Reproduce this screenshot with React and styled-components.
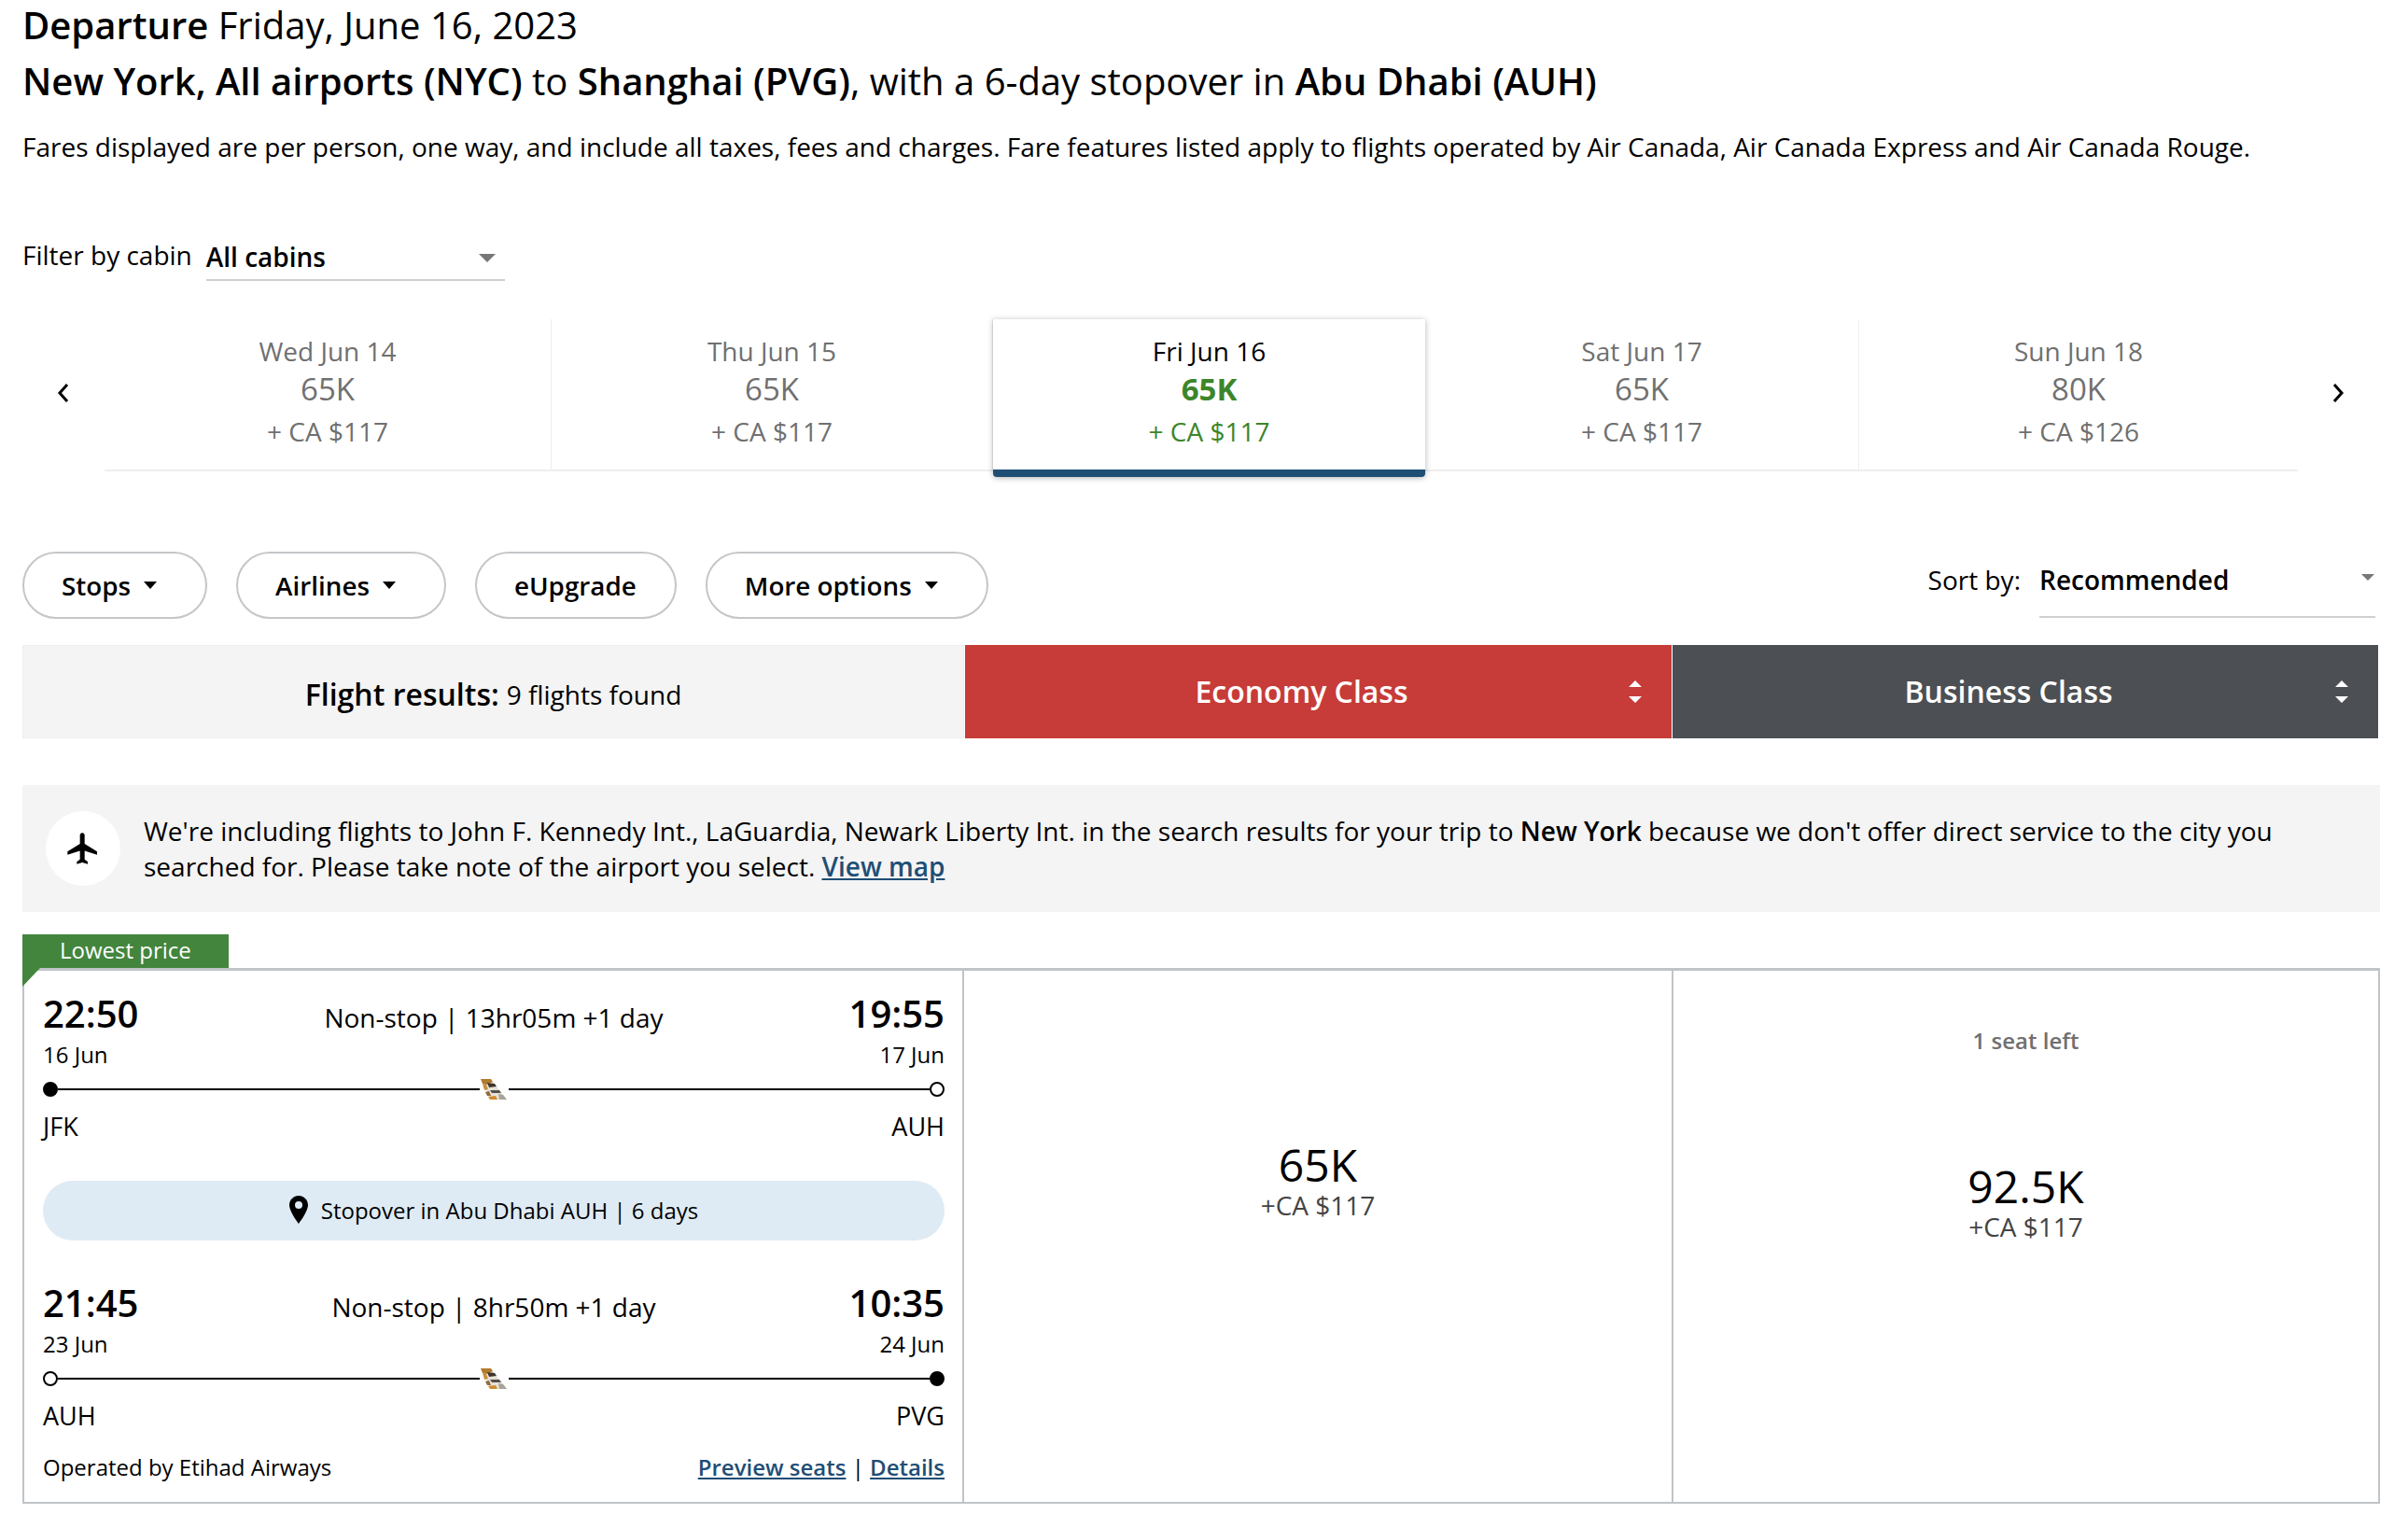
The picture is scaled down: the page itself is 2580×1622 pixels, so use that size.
import styled, { createGlobalStyle } from "styled-components";

const days = [
  { label: "Wed Jun 14", points: "65K", cash: "+ CA $117" },
  { label: "Thu Jun 15", points: "65K", cash: "+ CA $117" },
  { label: "Fri Jun 16", points: "65K", cash: "+ CA $117", active: true },
  { label: "Sat Jun 17", points: "65K", cash: "+ CA $117" },
  { label: "Sun Jun 18", points: "80K", cash: "+ CA $126" },
];

const Tail = () => (
  <TailSvg viewBox="0 0 28 22">
    <polygon points="0,0 11,0 28,22 10,22" fill="#e6e2da" />
    <polygon points="0,0 11,0 13,3 6,6 2,5" fill="#b17a2c" />
    <polygon points="2,5 6,6 8,11 4,12" fill="#c98f3a" />
    <polygon points="7,4 15,5 17,8 9,9" fill="#3f352d" />
    <polygon points="10,12 20,12 22,15 12,15" fill="#57504a" />
    <polygon points="5,14 9,13 11,18 7,18" fill="#8f6a3a" />
    <polygon points="8,19 16,18 18,22 10,22" fill="#d08a2e" />
    <polygon points="19,16 24,17 28,22 20,22" fill="#a8a298" />
  </TailSvg>
);

const Segment = ({ dep, depDate, arr, arrDate, from, to, info, endSolid }) => (
  <SegmentBox>
    <TimeRow>
      <Time>{dep}</Time>
      <Duration>{info}</Duration>
      <Time>{arr}</Time>
    </TimeRow>
    <SpreadRow>
      <DateText>{depDate}</DateText>
      <DateText>{arrDate}</DateText>
    </SpreadRow>
    <Track>
      <Dot $solid={!endSolid} />
      <TrackLine />
      <Tail />
      <TrackLine />
      <Dot $solid={endSolid} />
    </Track>
    <SpreadRow>
      <Airport>{from}</Airport>
      <Airport>{to}</Airport>
    </SpreadRow>
  </SegmentBox>
);

const App = () => {
  return (
    <Page>
      <GlobalStyle />
      <TitleTop>
        <b>Departure</b> Friday, June 16, 2023
      </TitleTop>
      <Title>
        <b>New York, All airports (NYC)</b> to <b>Shanghai (PVG)</b>, with a 6-day stopover in <b>Abu Dhabi (AUH)</b>
      </Title>
      <Note>
        Fares displayed are per person, one way, and include all taxes, fees and charges. Fare features listed apply to
        flights operated by Air Canada, Air Canada Express and Air Canada Rouge.
      </Note>

      <FilterRow>
        <FilterLabel>Filter by cabin</FilterLabel>
        <FilterSelect>
          All cabins
          <Caret />
        </FilterSelect>
      </FilterRow>

      <Strip>
        <Chevron viewBox="0 0 14 24">
          <path d="M11 3 3 12l8 9" />
        </Chevron>
        <Days>
          {days.map((d) => (
            <Day key={d.label} $active={d.active}>
              <DayLabel $active={d.active}>{d.label}</DayLabel>
              <DayPoints $active={d.active}>{d.points}</DayPoints>
              <DayCash $active={d.active}>{d.cash}</DayCash>
            </Day>
          ))}
        </Days>
        <Chevron viewBox="0 0 14 24">
          <path d="M3 3l8 9-8 9" />
        </Chevron>
      </Strip>

      <Toolbar>
        <PillButton $caret>
          Stops
          <SmallCaret />
        </PillButton>
        <PillButton $caret>
          Airlines
          <SmallCaret />
        </PillButton>
        <PillButton>eUpgrade</PillButton>
        <PillButton $caret>
          More options
          <SmallCaret />
        </PillButton>
        <SortBox>
          <SortLabel>Sort by:</SortLabel>
          <SortSelect>
            Recommended
            <SortCaret />
          </SortSelect>
        </SortBox>
      </Toolbar>

      <ClassRow>
        <ResultsCell>
          <b>Flight results:</b> <span>9 flights found</span>
        </ResultsCell>
        <ClassCell $bg="#c73b38">
          <ClassName>Economy Class</ClassName>
          <SortArrows viewBox="0 0 14 24">
            <path d="M7 0l7 7H0zM7 24l-7-7h14z" />
          </SortArrows>
        </ClassCell>
        <ClassCell $bg="#4c4f54">
          <ClassName>Business Class</ClassName>
          <SortArrows viewBox="0 0 14 24">
            <path d="M7 0l7 7H0zM7 24l-7-7h14z" />
          </SortArrows>
        </ClassCell>
      </ClassRow>

      <InfoBox>
        <PlaneCircle>
          <svg viewBox="0 0 24 24" width="40" height="40" fill="#000">
            <path d="M21 16v-2l-8-5V3.5c0-.83-.67-1.5-1.5-1.5S10 2.67 10 3.5V9l-8 5v2l8-2.5V19l-2 1.5V22l3.5-1 3.5 1v-1.5L13 19v-5.5l8 2.5z" />
          </svg>
        </PlaneCircle>
        <InfoText>
          We're including flights to John F. Kennedy Int., LaGuardia, Newark Liberty Int. in the search results for your
          trip to <b>New York</b> because we don't offer direct service to the city you searched for. Please take note of
          the airport you select. <InfoLink>View map</InfoLink>
        </InfoText>
      </InfoBox>

      <Card>
        <Badge>Lowest price</Badge>
        <FlightCell>
          <Segment
            dep="22:50"
            depDate="16 Jun"
            arr="19:55"
            arrDate="17 Jun"
            from="JFK"
            to="AUH"
            info="Non-stop | 13hr05m +1 day"
          />
          <Stopover>
            <svg viewBox="0 0 20 30" width="20" height="30" fill="#000">
              <path d="M10 0C4.5 0 0 4.4 0 10c0 7 10 20 10 20s10-13 10-20C20 4.4 15.500 0 10 0zm0 14a4 4 0 1 1 0-8 4 4 0 0 1 0 8z" />
            </svg>
            Stopover in Abu Dhabi AUH | 6 days
          </Stopover>
          <Segment
            dep="21:45"
            depDate="23 Jun"
            arr="10:35"
            arrDate="24 Jun"
            from="AUH"
            to="PVG"
            info="Non-stop | 8hr50m +1 day"
            endSolid
          />
          <FooterRow>
            <span>Operated by Etihad Airways</span>
            <span>
              <FooterLink>Preview seats</FooterLink> | <FooterLink>Details</FooterLink>
            </span>
          </FooterRow>
        </FlightCell>
        <FareCell $top="180px">
          <FarePoints>65K</FarePoints>
          <FareCash>+CA $117</FareCash>
        </FareCell>
        <FareCell $top="59px">
          <SeatsLeft>1 seat left</SeatsLeft>
          <FarePoints>92.5K</FarePoints>
          <FareCash>+CA $117</FareCash>
        </FareCell>
      </Card>
    </Page>
  );
};
export default App;

const GlobalStyle = createGlobalStyle`
  html, body {
    margin: 0;
    padding: 0;
    background: #fff;
  }
  body {
    font-family: "Open Sans", "Noto Sans", sans-serif;
    color: #000;
  }
`;

const Page = styled.div`
  width: 2580px;
  height: 1622px;
  padding: 0 30px 0 24px;
  box-sizing: border-box;
  overflow: hidden;
`;

const TitleTop = styled.div`
  height: 58px;
  line-height: 54px;
  font-size: 40px;
  b {
    font-weight: 600;
  }
`;

const Title = styled(TitleTop)`
  height: 60px;
  line-height: 58px;
`;

const Note = styled.div`
  margin-top: 20px;
  height: 40px;
  line-height: 38px;
  font-size: 28px;
  white-space: nowrap;
`;

const FilterRow = styled.div`
  margin-top: 74px;
  height: 90px;
  display: flex;
  align-items: flex-start;
  gap: 15px;
`;

const FilterLabel = styled.div`
  font-size: 28px;
  line-height: 40px;
  margin-top: 1px;
`;

const FilterSelect = styled.div`
  position: relative;
  width: 320px;
  height: 47px;
  line-height: 46px;
  border-bottom: 2px solid #cfcfcf;
  font-size: 28px;
  font-weight: 600;
`;

const Caret = styled.span`
  position: absolute;
  right: 10px;
  top: 20px;
  width: 0;
  height: 0;
  border-left: 9px solid transparent;
  border-right: 9px solid transparent;
  border-top: 9px solid #777;
`;

const SortCaret = styled(Caret)`
  right: 1px;
  top: 17px;
  border-left-width: 7px;
  border-right-width: 7px;
  border-top-width: 7px;
`;

const Strip = styled.div`
  display: flex;
  align-items: flex-start;
  width: 2525px;
`;

const Chevron = styled.svg`
  width: 14px;
  height: 24px;
  margin: 67px 36px 0 36px;
  flex: none;
  fill: none;
  stroke: #000;
  stroke-width: 3;
  &:first-child {
    margin-left: 37px;
    margin-right: 37px;
  }
`;

const Days = styled.div`
  width: 2350px;
  display: grid;
  grid-template-columns: 479px 473px 463px 465px 470px;
  border-bottom: 2px solid #eee;
  height: 161px;
`;

const Day = styled.div`
  display: flex;
  flex-direction: column;
  align-items: center;
  padding-top: 16px;
  height: ${(p) => (p.$active ? "169px" : "161px")};
  box-sizing: border-box;
  border-right: ${(p) => (p.$active ? "none" : "1px solid #eee")};
  background: #fff;
  position: relative;
  ${(p) =>
    p.$active &&
    `
    border-bottom: 8px solid #1f4e75;
    border-radius: 0 0 4px 4px;
    box-shadow: 0 1px 6px rgba(0, 0, 0, 0.3);
    z-index: 1;
  `}
  &:last-child {
    border-right: none;
  }
`;

const DayLabel = styled.div`
  font-size: 28px;
  line-height: 37px;
  color: ${(p) => (p.$active ? "#000" : "#707070")};
`;

const DayPoints = styled.div`
  font-size: 33px;
  line-height: 44px;
  font-weight: ${(p) => (p.$active ? 700 : 400)};
  color: ${(p) => (p.$active ? "#3d8529" : "#707070")};
`;

const DayCash = styled.div`
  font-size: 28px;
  line-height: 46px;
  color: ${(p) => (p.$active ? "#3d8529" : "#707070")};
`;

const Toolbar = styled.div`
  margin-top: 86px;
  width: 2521px;
  display: flex;
  align-items: flex-start;
  gap: 31px;
  height: 72px;
`;

const PillButton = styled.div`
  height: 72px;
  box-sizing: border-box;
  padding: 0 ${(p) => (p.$caret ? "52px" : "41px")} 0 40px;
  border: 2px solid #c4c6c8;
  border-radius: 36px;
  display: flex;
  align-items: center;
  gap: 14px;
  font-size: 27.8px;
  font-weight: 600;
`;

const SmallCaret = styled.span`
  width: 0;
  height: 0;
  border-left: 7.5px solid transparent;
  border-right: 7.5px solid transparent;
  border-top: 8px solid #000;
`;

const SortBox = styled.div`
  margin-left: auto;
  display: flex;
  align-items: flex-start;
  gap: 20px;
`;

const SortLabel = styled.div`
  font-size: 28px;
  line-height: 40px;
  margin-top: 10px;
`;

const SortSelect = styled.div`
  position: relative;
  width: 360px;
  height: 62px;
  margin-top: 7px;
  line-height: 46px;
  border-bottom: 2px solid #cfcfcf;
  font-size: 28px;
  font-weight: 600;
`;

const ClassRow = styled.div`
  margin-top: 28px;
  display: grid;
  grid-template-columns: 1009px 757px 756px;
  gap: 0 1px;
  height: 100px;
  width: 2524px;
`;

const ResultsCell = styled.div`
  background: #f4f4f4;
  border: 1px solid #eee;
  padding-top: 4px;
  box-sizing: border-box;
  display: flex;
  align-items: center;
  justify-content: center;
  gap: 8px;
  b {
    font-size: 32px;
    font-weight: 600;
  }
  span {
    font-size: 28px;
    margin-top: 2px;
  }
`;

const ClassCell = styled.div`
  background: ${(p) => p.$bg};
  color: #fff;
  display: flex;
  align-items: center;
  padding-right: 32px;
`;

const ClassName = styled.div`
  flex: 1;
  text-align: center;
  font-size: 32px;
  font-weight: 600;
  margin-top: -2px;
  padding-left: 10px;
`;

const SortArrows = styled.svg`
  width: 14px;
  height: 24px;
  fill: #fff;
  flex: none;
`;

const InfoBox = styled.div`
  margin-top: 50px;
  height: 136px;
  width: 2526px;
  background: #f4f4f4;
  display: flex;
  align-items: center;
  padding-left: 25px;
  box-sizing: border-box;
`;

const PlaneCircle = styled.div`
  width: 80px;
  height: 80px;
  border-radius: 50%;
  background: #fff;
  display: flex;
  align-items: center;
  justify-content: center;
  flex: none;
  margin-right: 25px;
`;

const InfoText = styled.div`
  font-size: 28px;
  line-height: 38px;
  width: 2370px;
  b {
    font-weight: 600;
  }
`;

const InfoLink = styled.span`
  color: #1f4e75;
  font-weight: 600;
  text-decoration: underline;
`;

const Card = styled.div`
  position: relative;
  margin-top: 60px;
  width: 2526px;
  height: 574px;
  box-sizing: border-box;
  border: 2px solid #c0c4c8;
  border-top-width: 3px;
  display: grid;
  grid-template-columns: 1007px 758px 1fr;
`;

const Badge = styled.div`
  position: absolute;
  left: -2px;
  top: -39px;
  width: 221px;
  height: 36px;
  padding-left: 40px;
  box-sizing: border-box;
  background: #43853d;
  color: #fff;
  font-size: 24px;
  line-height: 34px;
  &::after {
    content: "";
    position: absolute;
    left: 0;
    top: 36px;
    width: 0;
    height: 0;
    border-top: 20px solid #43853d;
    border-right: 19px solid transparent;
  }
`;

const FlightCell = styled.div`
  padding: 0 19px 0 20px;
  border-right: 2px solid #c0c4c8;
`;

const SegmentBox = styled.div`
  display: flex;
  flex-direction: column;
`;

const TimeRow = styled.div`
  display: flex;
  justify-content: space-between;
  align-items: center;
  height: 56px;
  margin-top: 18px;
`;

const Time = styled.div`
  font-size: 40px;
  font-weight: 600;
  line-height: 56px;
`;

const Duration = styled.div`
  font-size: 28px;
  margin-top: 8px;
`;

const SpreadRow = styled.div`
  display: flex;
  justify-content: space-between;
`;

const DateText = styled.div`
  font-size: 24px;
  line-height: 34px;
  margin-top: -1px;
`;

const Track = styled.div`
  display: flex;
  align-items: center;
  height: 24px;
  margin-top: 8px;
`;

const Dot = styled.span`
  width: 16px;
  height: 16px;
  box-sizing: border-box;
  border-radius: 50%;
  border: 2px solid #000;
  background: ${(p) => (p.$solid ? "#000" : "#fff")};
  flex: none;
`;

const TrackLine = styled.span`
  flex: 1;
  height: 2px;
  background: #000;
`;

const TailSvg = styled.svg`
  width: 28px;
  height: 22px;
  margin: 0 2px 0 1px;
  flex: none;
`;

const Airport = styled.div`
  font-size: 27px;
  line-height: 38px;
  margin-top: 9px;
`;

const Stopover = styled.div`
  margin-top: 39px;
  margin-bottom: 21px;
  height: 64px;
  padding-bottom: 2px;
  box-sizing: border-box;
  border-radius: 32px;
  background: #dfebf4;
  display: flex;
  align-items: center;
  justify-content: center;
  gap: 14px;
  font-size: 24px;
`;

const FooterRow = styled.div`
  margin-top: 19px;
  display: flex;
  justify-content: space-between;
  font-size: 24px;
  line-height: 34px;
`;

const FooterLink = styled.span`
  color: #1f4e75;
  font-weight: 600;
  text-decoration: underline;
`;

const FareCell = styled.div`
  display: flex;
  flex-direction: column;
  align-items: center;
  padding-top: ${(p) => p.$top};
  &:last-child {
    border-left: 2px solid #c0c4c8;
  }
`;

const SeatsLeft = styled.div`
  font-size: 24px;
  font-weight: 600;
  color: #707070;
  line-height: 32px;
  margin-bottom: 112px;
`;

const FarePoints = styled.div`
  font-size: 48px;
  line-height: 56px;
`;

const FareCash = styled.div`
  font-size: 28px;
  line-height: 32px;
  margin-top: -1px;
  color: #444;
`;
